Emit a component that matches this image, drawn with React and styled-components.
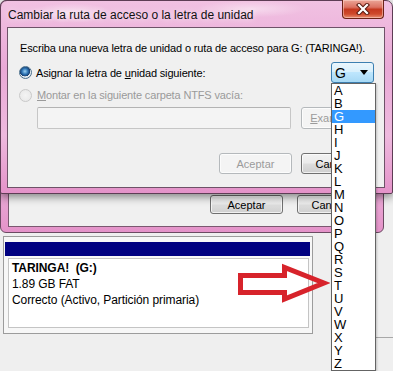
import React from "react";
import styled, { createGlobalStyle } from "styled-components";

const Global = createGlobalStyle`
  html, body { margin: 0; padding: 0; }
  body {
    width: 393px;
    height: 371px;
    overflow: hidden;
    background: #efefef;
    font-family: "Liberation Sans", Arial, sans-serif;
  }
`;

const Page = styled.div`
  position: relative;
  width: 393px;
  height: 371px;
  overflow: hidden;
  background: #efefef;
  display: flex;
  flex-direction: column;
`;

const DialogStack = styled.div`
  display: grid;
  height: 233px;
  & > * {
    grid-area: 1 / 1;
  }
`;

const frameBg = `
  background:
    radial-gradient(ellipse 60px 14px at 70px 12px, rgba(255,255,255,0.55), rgba(255,255,255,0) 70%),
    radial-gradient(ellipse 80px 12px at 250px 8px, rgba(255,255,255,0.45), rgba(255,255,255,0) 70%),
    linear-gradient(180deg, #f1c1e2 0%, #e9a9d6 35%, #eeb9de 70%, #e493c9 100%);
`;

const BackDialog = styled.div`
  box-sizing: border-box;
  width: 384px;
  height: 233px;
  ${frameBg}
  border: 1px solid #6b4a62;
  border-radius: 6px;
  padding: 0 7px 5px 7px;
  display: flex;
  flex-direction: column;
  justify-content: flex-end;
`;

const BackPanel = styled.div`
  box-sizing: border-box;
  height: 200px;
  background: #f0f0f0;
  border: 1px solid #7a5870;
  display: flex;
  flex-direction: column;
  justify-content: flex-end;
  padding: 0 5px 12px 0;
`;

const TopDialog = styled.div`
  box-sizing: border-box;
  align-self: start;
  width: 393px;
  height: 194px;
  ${frameBg}
  border: 1px solid #5e3d55;
  border-radius: 7px 7px 2px 2px;
  padding: 0 7px 5px 6px;
  display: flex;
  flex-direction: column;
  box-shadow: 0 3px 9px rgba(0, 0, 0, 0.45);
`;

const TitleBar = styled.div`
  height: 26px;
  display: flex;
  align-items: flex-start;
  justify-content: space-between;
`;

const TitleText = styled.span`
  margin-top: 7px;
  margin-left: 1px;
  font-size: 12px;
  color: #111;
  text-shadow: 0 0 6px rgba(255, 255, 255, 0.9);
  white-space: nowrap;
`;

const CloseButton = styled.div`
  box-sizing: border-box;
  width: 42px;
  height: 19px;
  margin-top: -1px;
  margin-right: 1px;
  border: 1px solid #6b2217;
  border-top: none;
  border-radius: 0 0 4px 4px;
  background: linear-gradient(180deg, #eba597 0%, #dc7262 40%, #c5381f 52%, #cf4a2c 78%, #e98f73 100%);
  box-shadow: inset 0 0 0 1px rgba(255, 220, 210, 0.5);
  display: flex;
  align-items: center;
  justify-content: center;
`;

const Panel = styled.div`
  box-sizing: border-box;
  flex: 1;
  background: #f0f0f0;
  border: 1px solid #6e5268;
  padding: 13px 10px 0 11px;
  display: flex;
  flex-direction: column;
  font-size: 11px;
  letter-spacing: -0.15px;
  color: #000;
`;

const Intro = styled.div`
  margin-left: 1px;
  line-height: 15px;
  white-space: nowrap;
`;

const Row = styled.div`
  display: flex;
  align-items: center;
  height: ${(p) => p.$h}px;
  margin-top: ${(p) => p.$mt || 0}px;
  padding-left: ${(p) => p.$indent || 0}px;
  justify-content: ${(p) => p.$justify || "flex-start"};
  gap: ${(p) => p.$gap || 0}px;
`;

const Radio = styled.span`
  box-sizing: border-box;
  width: 13px;
  height: 13px;
  border-radius: 50%;
  flex: none;
  border: 1px solid ${(p) => (p.$disabled ? "#c9c9c9" : "#4a6f8c")};
  background: ${(p) =>
    p.$disabled
      ? "radial-gradient(circle at 50% 50%, #f4f4f4, #e6e6e6)"
      : "radial-gradient(circle at 45% 40%, #9ad3f5 0%, #2a6fb0 35%, #1a3f6e 55%, #e8eef2 58%, #d6dde2 100%)"};
`;

const Label = styled.span`
  margin-left: ${(p) => p.$ml}px;
  color: ${(p) => (p.$disabled ? "#9a9a9a" : "#000")};
  white-space: nowrap;
  flex: 1;
`;

const U = styled.span`
  text-decoration: underline;
`;

const Combo = styled.div`
  box-sizing: border-box;
  width: 43px;
  height: 21px;
  border: 1px solid #3c7fb1;
  border-radius: 3px;
  background: linear-gradient(180deg, #eaf6fd 0%, #d9f0fc 45%, #bee6fd 50%, #a7d9f5 100%);
  display: flex;
  align-items: center;
  justify-content: space-between;
  padding: 0 5px 0 3px;
  font-size: 14px;
  letter-spacing: 0;
  color: #000;
`;

const TextField = styled.div`
  box-sizing: border-box;
  width: 256px;
  height: 22px;
  border: 1px solid #c6c6c6;
  border-top-color: #b3b3b3;
  border-radius: 2px;
  background: #f4f4f4;
`;

const Button = styled.div`
  box-sizing: border-box;
  width: 73px;
  height: ${(p) => p.$h || 21}px;
  margin-left: ${(p) => p.$ml || 0}px;
  border-radius: 3px;
  display: flex;
  align-items: center;
  justify-content: center;
  font-size: 11px;
  letter-spacing: 0;
  white-space: nowrap;
  overflow: hidden;
  border: 1px solid ${(p) => (p.$disabled ? "#b5b9bc" : "#707070")};
  color: ${(p) => (p.$disabled ? "#9b9b9b" : "#000")};
  background: ${(p) =>
    p.$disabled
      ? "#f4f4f4"
      : "linear-gradient(180deg, #f2f2f2 0%, #ebebeb 48%, #dddddd 52%, #cfcfcf 100%)"};
  box-shadow: inset 0 0 0 1px rgba(255, 255, 255, 0.7);
`;

const DropList = styled.div`
  position: absolute;
  left: 331px;
  top: 83px;
  width: 45px;
  box-sizing: border-box;
  border: 1px solid #646464;
  background: #fff;
  display: flex;
  flex-direction: column;
  box-shadow: 1px 1px 2px rgba(0, 0, 0, 0.2);
`;

const DropItem = styled.div`
  height: 13px;
  line-height: 13px;
  padding-left: 2px;
  font-size: 13px;
  font-family: "Liberation Sans", Arial, sans-serif;
  background: ${(p) => (p.$sel ? "#3399ff" : "transparent")};
  color: ${(p) => (p.$sel ? "#fff" : "#000")};
`;

const ArrowSvg = styled.svg`
  position: absolute;
  left: 230px;
  top: 258px;
`;

const VolumeArea = styled.div`
  display: flex;
  align-items: flex-start;
  margin-top: 3px;
  padding-left: 3px;
`;

const VolumeBox = styled.div`
  box-sizing: border-box;
  width: 319px;
  height: 98px;
  border: 1px solid #9c9c9c;
  background: #f7f7f7;
  padding: 5px 2px 0 1px;
  display: flex;
  flex-direction: column;
`;

const NavyBar = styled.div`
  height: 14px;
  background: #000080;
`;

const VolumeInfo = styled.div`
  box-sizing: border-box;
  height: 70px;
  margin: 2px 1px 0 3px;
  border: 1px solid #c4c4c4;
  background: #fff;
  padding: 1px 3px;
  font-size: 12px;
  letter-spacing: -0.08px;
  line-height: 16px;
  color: #000;
  white-space: nowrap;
`;

const Bold = styled.div`
  font-weight: bold;
`;

const NextVolume = styled.div`
  margin-left: 60px;
  width: 20px;
  height: 101px;
  border-left: 1px solid #a8a8a8;
  border-bottom: 1px solid #a8a8a8;
`;

const letters = ["A", "B", "G", "H", "I", "J", "K", "L", "M", "N", "O", "P", "Q", "R", "S", "T", "U", "V", "W", "X", "Y", "Z"];

export default function App() {
  return (
    <Page>
      <Global />
      <DialogStack>
        <BackDialog>
          <BackPanel>
            <Row $h={19} $justify="flex-end" $gap={14}>
              <Button $h={19}>Aceptar</Button>
              <Button $h={19}>Cancelar</Button>
            </Row>
          </BackPanel>
        </BackDialog>
        <TopDialog>
          <TitleBar>
            <TitleText>Cambiar la ruta de acceso o la letra de unidad</TitleText>
            <CloseButton>
              <svg width="14" height="12" viewBox="0 0 14 12">
                <path d="M3 2 L11 10 M11 2 L3 10" stroke="#5a1a10" strokeWidth="4.2" strokeLinecap="square" />
                <path d="M3 2 L11 10 M11 2 L3 10" stroke="#ffffff" strokeWidth="2.2" strokeLinecap="square" />
              </svg>
            </CloseButton>
          </TitleBar>
          <Panel>
            <Intro>Escriba una nueva letra de unidad o ruta de acceso para G: (TARINGA!).</Intro>
            <Row $h={21} $mt={6}>
              <Radio />
              <Label $ml={4}>
                Asignar la letra de <U>u</U>nidad siguiente:
              </Label>
              <Combo>
                <span>G</span>
                <svg width="8" height="5" viewBox="0 0 8 5">
                  <path d="M0 0 H8 L4 5 Z" fill="#000" />
                </svg>
              </Combo>
            </Row>
            <Row $h={16} $mt={4}>
              <Radio $disabled />
              <Label $ml={5} $disabled>
                <U>M</U>ontar en la siguiente carpeta NTFS vacía:
              </Label>
            </Row>
            <Row $h={22} $mt={4} $indent={18}>
              <TextField />
              <Button $h={22} $ml={10} $disabled>
                <span>
                  <U>E</U>xaminar...
                </span>
              </Button>
            </Row>
            <Row $h={21} $mt={24} $justify="flex-end" $gap={9}>
              <Button $disabled>Aceptar</Button>
              <Button>Cancelar</Button>
            </Row>
          </Panel>
        </TopDialog>
      </DialogStack>

      <VolumeArea>
        <VolumeBox>
          <NavyBar />
          <VolumeInfo>
            <Bold>TARINGA!&nbsp; (G:)</Bold>
            <div>1.89 GB FAT</div>
            <div>Correcto (Activo, Partición primaria)</div>
          </VolumeInfo>
        </VolumeBox>
        <NextVolume />
      </VolumeArea>

      <DropList>
        {letters.map((l) => (
          <DropItem key={l} $sel={l === "G"}>
            {l}
          </DropItem>
        ))}
      </DropList>

      <ArrowSvg width="100" height="50" viewBox="0 0 100 50">
        <polygon
          points="10.5,17.5 54.5,17.5 54.5,9.5 94,25 54.5,41 54.5,34.5 10.5,34.5"
          fill="none"
          stroke="#d7232b"
          strokeWidth="5"
          strokeLinejoin="miter"
        />
      </ArrowSvg>
    </Page>
  );
}
